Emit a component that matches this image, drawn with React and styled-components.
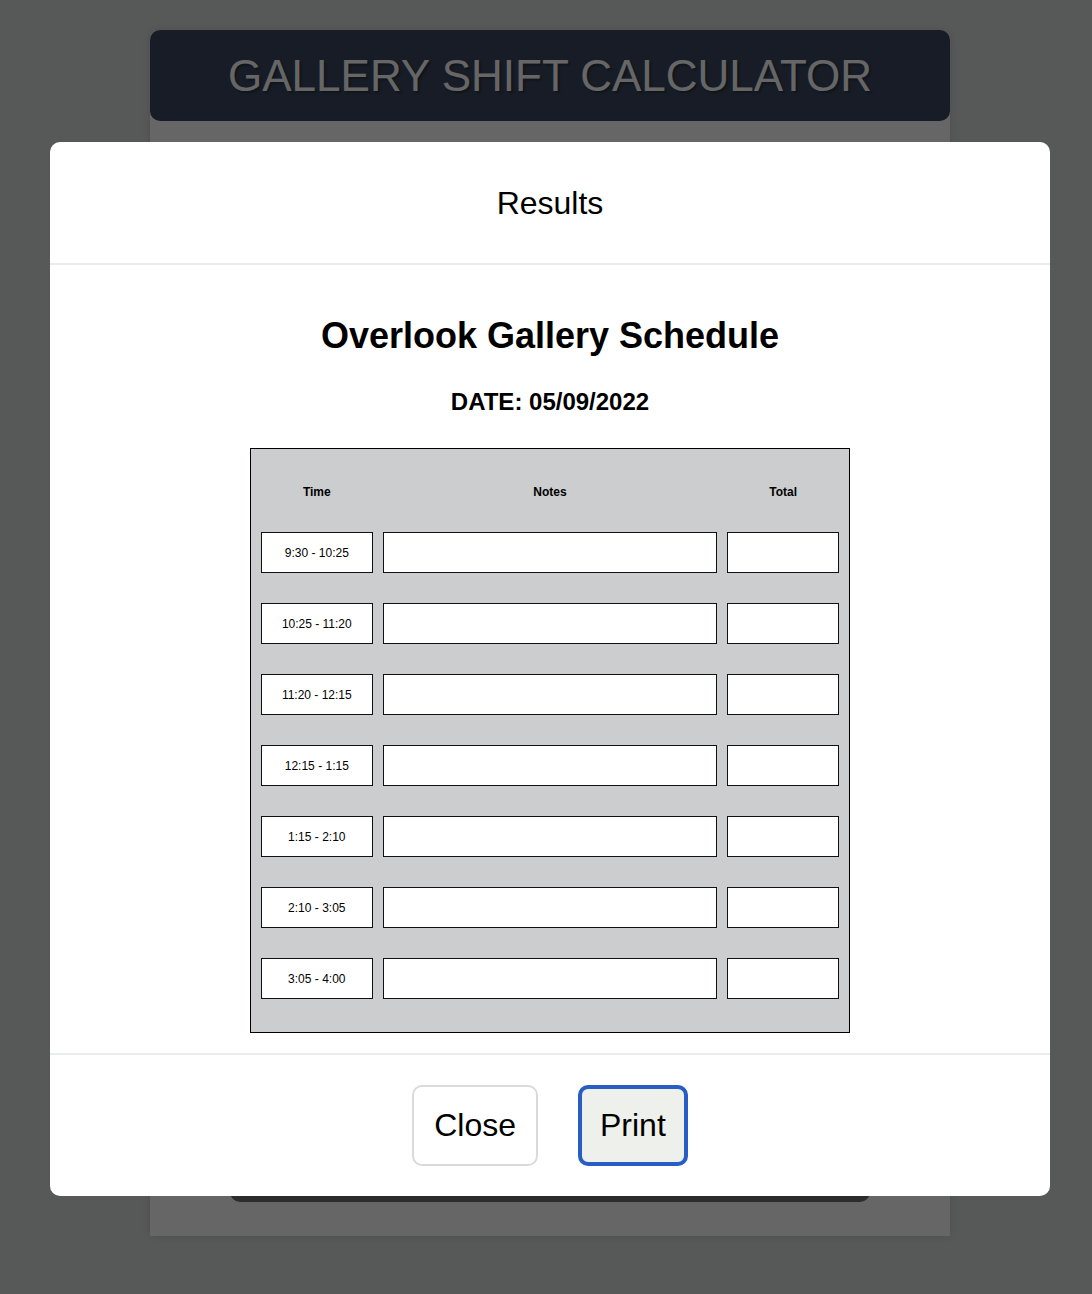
import React from "react";
import styled, { createGlobalStyle } from "styled-components";

const GlobalStyle = createGlobalStyle`
  *, *::before, *::after { box-sizing: border-box; }
  body {
    margin: 0;
    background: #dadedc;
    color: #000;
    font-family: "Liberation Sans", Helvetica, Arial, sans-serif;
  }
`;

const Page = styled.div`
  display: flex;
  flex-direction: column;
  align-items: center;
  min-height: 100vh;
  padding: 30px 0 58px 8px;
`;

const Card = styled.div`
  display: flex;
  flex-direction: column;
  flex: 1;
  width: 100%;
  max-width: 800px;
  background: #fff;
  border-radius: 10px 10px 0 0;
  box-shadow: 0 0 10px rgba(0, 0, 0, 0.12);
`;

const Banner = styled.header`
  padding: 20px;
  border-radius: 10px;
  background: #3a485f;
  text-align: center;
`;

const BannerTitle = styled.h1`
  margin: 0;
  color: #fff;
  font-size: 44px;
  font-weight: 400;
  line-height: 51px;
  text-shadow: 2px 2px 2px rgba(0, 0, 0, 0.3);
`;

const CardBody = styled.main`
  display: flex;
  flex-direction: column;
  justify-content: flex-end;
  flex: 1;
  padding: 0 10% 34px;
`;

const Panel = styled.div`
  height: 80px;
  border-radius: 10px;
  background: #6e6e6f;
`;

const Overlay = styled.div`
  position: fixed;
  inset: 0;
  overflow: auto;
  display: flex;
  justify-content: center;
  align-items: flex-start;
  padding: 142px 0 0 8px;
  background: rgba(0, 0, 0, 0.6);
`;

const Modal = styled.section`
  width: 100%;
  max-width: 1000px;
  border-radius: 10px;
  background: #fff;
`;

const ModalHeader = styled.header`
  padding: 43px 20px 41px;
  border-bottom: 2px solid #ebecec;
  text-align: center;
`;

const ModalTitle = styled.h2`
  margin: 0;
  font-size: 32px;
  font-weight: 400;
  line-height: 37px;
`;

const ModalBody = styled.div`
  display: flex;
  flex-direction: column;
  align-items: center;
  padding: 50px 20px 20px;
`;

const ScheduleTitle = styled.h3`
  margin: 0 0 32px;
  font-size: 36px;
  line-height: 41px;
`;

const ScheduleDate = styled.h4`
  margin: 0 0 32px;
  font-size: 24px;
  line-height: 28px;
`;

const Schedule = styled.table`
  display: block;
  width: 100%;
  max-width: 600px;
  padding: 36px 10px 33px;
  border: 1px solid #000;
  background: #cccdce;
  font-size: 12px;
  line-height: 14px;
`;

const ScheduleHead = styled.thead`
  display: block;
  margin-bottom: 33px;
`;

const ScheduleRows = styled.tbody`
  display: grid;
  gap: 30px;
`;

const Row = styled.tr`
  display: grid;
  grid-template-columns: 1fr 3fr 1fr;
  gap: 10px;
`;

const HeadCell = styled.th`
  padding: 0;
  text-align: center;
`;

const Cell = styled.td`
  display: flex;
  align-items: center;
  justify-content: center;
  height: 41px;
  padding: 0;
  border: 1px solid #111;
  background: #fff;
`;

const ModalFooter = styled.footer`
  display: flex;
  justify-content: center;
  gap: 40px;
  padding: 30px;
  border-top: 2px solid #ebecec;
`;

const Button = styled.button`
  padding: ${(p) => (p.$active ? "18px" : "20px")};
  border: ${(p) => (p.$active ? "4px solid #275dc5" : "2px solid #d9dbdb")};
  border-radius: 10px;
  background: ${(p) => (p.$active ? "#eef0eb" : "#fff")};
  color: #000;
  font-family: inherit;
  font-size: 32px;
  line-height: 37px;
  cursor: pointer;
`;

const shifts = [
  "9:30 - 10:25",
  "10:25 - 11:20",
  "11:20 - 12:15",
  "12:15 - 1:15",
  "1:15 - 2:10",
  "2:10 - 3:05",
  "3:05 - 4:00",
];

export default function App() {
  return (
    <>
      <GlobalStyle />
      <Page>
        <Card>
          <Banner>
            <BannerTitle>GALLERY SHIFT CALCULATOR</BannerTitle>
          </Banner>
          <CardBody>
            <Panel />
          </CardBody>
        </Card>
      </Page>
      <Overlay>
        <Modal role="dialog" aria-modal="true" aria-labelledby="results-title">
          <ModalHeader>
            <ModalTitle id="results-title">Results</ModalTitle>
          </ModalHeader>
          <ModalBody>
            <ScheduleTitle>Overlook Gallery Schedule</ScheduleTitle>
            <ScheduleDate>DATE: 05/09/2022</ScheduleDate>
            <Schedule>
              <ScheduleHead>
                <Row>
                  <HeadCell scope="col">Time</HeadCell>
                  <HeadCell scope="col">Notes</HeadCell>
                  <HeadCell scope="col">Total</HeadCell>
                </Row>
              </ScheduleHead>
              <ScheduleRows>
                {shifts.map((shift) => (
                  <Row key={shift}>
                    <Cell>{shift}</Cell>
                    <Cell />
                    <Cell />
                  </Row>
                ))}
              </ScheduleRows>
            </Schedule>
          </ModalBody>
          <ModalFooter>
            <Button type="button">Close</Button>
            <Button type="button" $active>
              Print
            </Button>
          </ModalFooter>
        </Modal>
      </Overlay>
    </>
  );
}
